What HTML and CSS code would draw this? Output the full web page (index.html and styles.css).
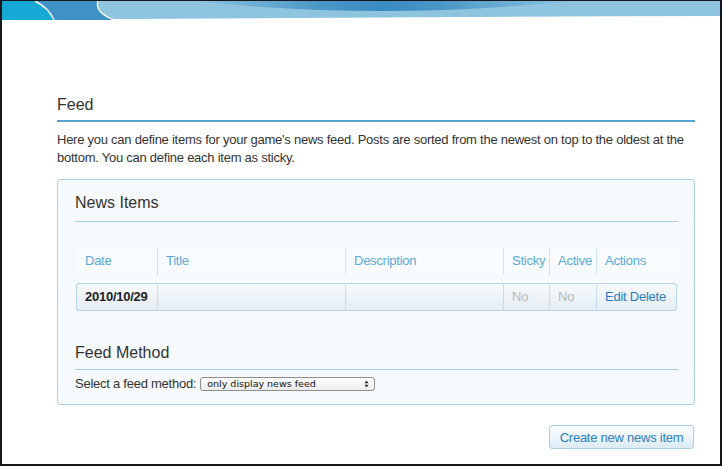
FILE: index.html
```html
<!DOCTYPE html>
<html lang="en">
<head>
<meta charset="utf-8">
<title>Feed</title>
<link rel="stylesheet" href="styles.css">
</head>
<body>
<div class="frame">
  <svg class="banner" viewBox="0 0 718 19" preserveAspectRatio="none" aria-hidden="true">
    <defs>
      <linearGradient id="band" x1="0" y1="0" x2="1" y2="0">
        <stop offset="0" stop-color="#8fc4df"/>
        <stop offset="0.35" stop-color="#4a96c6"/>
        <stop offset="0.5" stop-color="#3a8bc0"/>
        <stop offset="0.65" stop-color="#4a96c6"/>
        <stop offset="1" stop-color="#8fc4df"/>
      </linearGradient>
    </defs>
    <path d="M0 0 H718 V15 Q360 16 0 19 Z" fill="#8fc4df"/>
    <path d="M190 0 Q380 20 570 0 Z" fill="url(#band)"/>
    <path d="M0 0 H96 C94 6 97 13 112 19 H0 Z" fill="#3e92c6"/>
    <path d="M96 0 C94 6 97 13 112 19" fill="none" stroke="#ffffff" stroke-width="1.4"/>
    <path d="M0 0 H33 Q47 7 52 19 H0 Z" fill="#16a9d6"/>
    <path d="M33 0 Q47 7 52 19" fill="none" stroke="#ffffff" stroke-width="1.4"/>
  </svg>
  <main class="page">
    <h2 class="section-title">Feed</h2>
    <p class="intro">Here you can define items for your game's news feed. Posts are sorted from the newest on top to the oldest at the bottom. You can define each item as sticky.</p>
    <section class="panel">
      <h3 class="panel-title">News Items</h3>
      <div class="grid">
        <div class="row head">
          <div class="cell">Date</div>
          <div class="cell">Title</div>
          <div class="cell">Description</div>
          <div class="cell">Sticky</div>
          <div class="cell">Active</div>
          <div class="cell">Actions</div>
        </div>
        <div class="row item">
          <div class="cell date">2010/10/29</div>
          <div class="cell"></div>
          <div class="cell"></div>
          <div class="cell muted">No</div>
          <div class="cell muted">No</div>
          <div class="cell links"><a href="#">Edit</a> <a href="#">Delete</a></div>
        </div>
      </div>
      <h3 class="panel-title method-title">Feed Method</h3>
      <div class="method-row">
        <label for="method">Select a feed method:</label>
        <span class="select-wrap">
          <select id="method" class="select">
            <option>only display news feed</option>
          </select>
          <svg class="select-arrows" viewBox="0 0 6 9" aria-hidden="true">
            <path d="M0.5 3.5 L3 0.5 L5.5 3.5 Z" fill="#222"/>
            <path d="M0.5 5.5 L3 8.5 L5.5 5.5 Z" fill="#222"/>
          </svg>
        </span>
      </div>
    </section>
    <div class="actions">
      <button class="btn" type="button">Create new news item</button>
    </div>
  </main>
</div>
</body>
</html>
```
FILE: styles.css
```css
html, body {
  margin: 0;
  padding: 0;
}

body {
  width: 722px;
  height: 466px;
  font-family: "Liberation Sans", Arial, Helvetica, sans-serif;
  color: #333;
  background: #fff;
}

.frame {
  box-sizing: border-box;
  width: 722px;
  height: 466px;
  border: 2px solid #16161d;
  border-top-width: 1px;
  background: #fff;
  overflow: hidden;
}

.banner {
  display: block;
  width: 718px;
  height: 19px;
}

.page {
  padding: 0 25px 0 55px;
}

.section-title {
  margin: 75px 0 0;
  font-size: 16px;
  font-weight: normal;
  line-height: 20px;
  color: #333;
  padding-bottom: 5px;
  border-bottom: 2px solid #5aa2cf;
}

.intro {
  margin: 9px 0 0;
  font-size: 13px;
  letter-spacing: -0.25px;
  line-height: 18px;
  color: #333;
}

.panel {
  margin-top: 12px;
  border: 1px solid #a9cfe2;
  border-radius: 3px;
  background: #f6fafd;
  padding: 13px 16px 12px 17px;
}

.panel-title {
  margin: 0;
  font-size: 16px;
  font-weight: normal;
  line-height: 20px;
  color: #333;
  padding-bottom: 8px;
  border-bottom: 1px solid #a6d0e4;
}

.grid {
  margin: 26px 0 0 1px;
}

.row {
  display: grid;
  grid-template-columns: 81px 188px 158px 46px 47px 81px;
}

.cell {
  box-sizing: border-box;
  padding-left: 8px;
  font-size: 13px;
  letter-spacing: -0.25px;
  white-space: nowrap;
  border-left: 1px solid transparent;
}

.head .cell {
  height: 26px;
  line-height: 26px;
  color: #5aaad8;
  background: #f9fcfe;
}

.head .cell + .cell {
  border-left-color: #cfe4ef;
}

.item {
  margin-top: 9px;
}

.item .cell {
  height: 28px;
  line-height: 26px;
  border-top: 1px solid #b7d6e7;
  border-bottom: 1px solid #b7d6e7;
  border-left-color: #c6deeb;
  background: linear-gradient(#f6f9fb, #e6eef4);
}

.item .cell:first-child {
  border-left-color: #b7d6e7;
  border-radius: 3px 0 0 3px;
}

.item .cell:last-child {
  border-right: 1px solid #b7d6e7;
  border-radius: 0 3px 3px 0;
}

.date {
  font-weight: bold;
  color: #222;
}

.muted {
  color: #b8b8b8;
}

.links a {
  color: #2c7cba;
  text-decoration: none;
}

.method-title {
  margin-top: 32px;
  padding-bottom: 6px;
}

.method-row {
  margin-top: 6px;
  display: flex;
  align-items: center;
  gap: 4px;
  font-size: 13px;
  letter-spacing: -0.25px;
  line-height: 16px;
  color: #333;
}

.select-wrap {
  position: relative;
  display: inline-block;
  width: 175px;
  height: 14px;
  letter-spacing: 0;
}

.select {
  -webkit-appearance: none;
  appearance: none;
  box-sizing: border-box;
  display: block;
  width: 175px;
  height: 14px;
  margin: 0;
  padding: 0 0 0 6px;
  border: 1px solid #8e8e8e;
  border-radius: 3px;
  background: linear-gradient(#ffffff, #ececec);
  font-family: "DejaVu Sans", Verdana, sans-serif;
  font-size: 9.5px;
  line-height: 12px;
  color: #111;
}

.select-arrows {
  position: absolute;
  right: 6px;
  top: 3px;
  width: 5px;
  height: 8px;
  pointer-events: none;
}

.actions {
  display: flex;
  justify-content: flex-end;
  margin: 20px 1px 0 0;
}

.btn {
  box-sizing: border-box;
  width: 145px;
  height: 24px;
  padding: 0;
  border: 1px solid #a9cfe2;
  border-radius: 3px;
  background: linear-gradient(#fdfeff, #dcebf5);
  color: #2e7fbd;
  font-family: "Liberation Sans", Arial, Helvetica, sans-serif;
  font-size: 13px;
  letter-spacing: -0.25px;
  cursor: pointer;
}
```
